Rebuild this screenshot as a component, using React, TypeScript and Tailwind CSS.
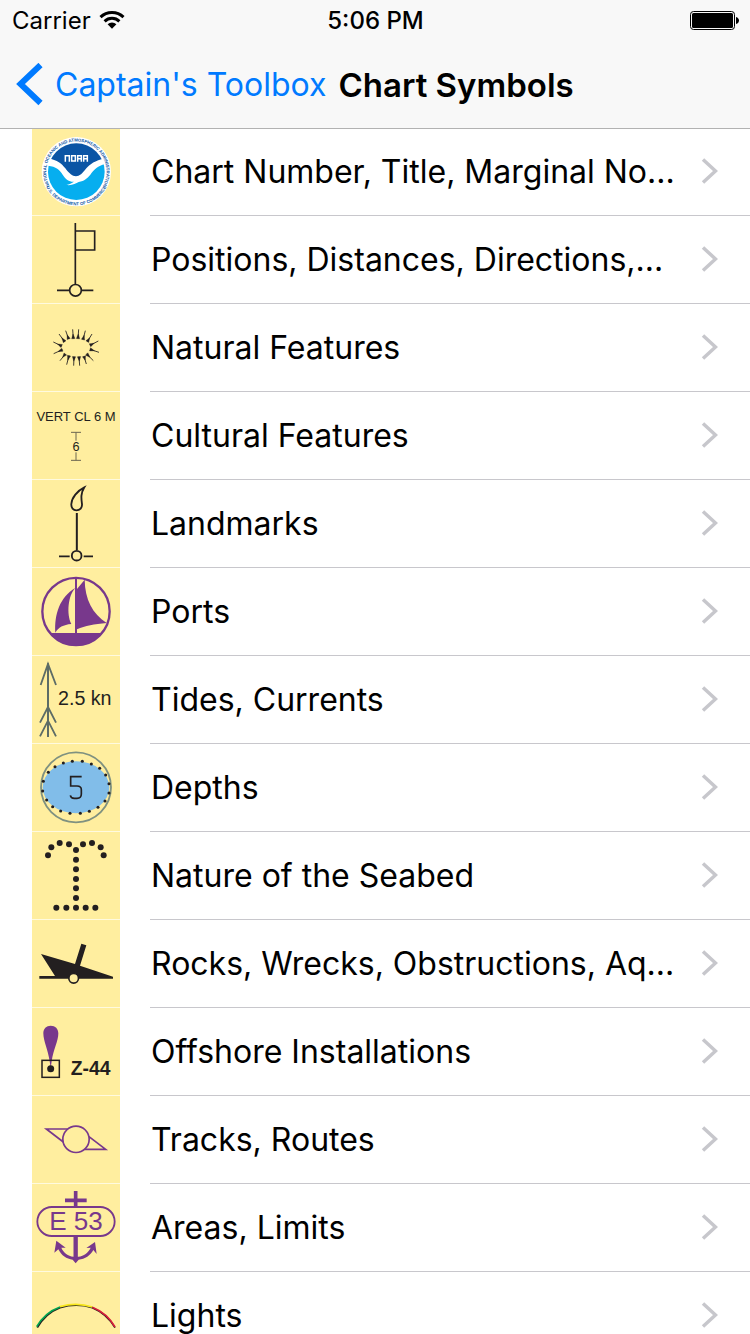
import React from "react";

const INK = "#231f20";
const PURPLE = "#78388c";
const SLATE = "#5d6c66";
const SANS = "'Liberation Sans', Arial, sans-serif";

function Symbol({ top, children }: { top: number; children: React.ReactNode }) {
  return (
    <svg viewBox={`24 ${top} 264 261`} className="block w-full" aria-hidden="true">
      {children}
    </svg>
  );
}

function Noaa() {
  return (
    <Symbol top={6}>
      <defs>
        <clipPath id="noaa-disc">
          <circle cx="157" cy="137" r="85" />
        </clipPath>
        <path id="noaa-upper" d="M93 201 A90.500 90.500 0 1 1 221 201" />
        <path id="noaa-lower" d="M56 137 A101 101 0 0 0 258 137" />
      </defs>
      <circle cx="157" cy="137" r="104" fill="#fff" />
      <g clipPath="url(#noaa-disc)">
        <path
          d="M70 40 H244 V97 C212 103 199 114 187 127 C176 142 166 151 156 151 C145 151 134 141 124 127 C113 113 100 100 70 97Z"
          fill="#0b55a5"
        />
        <path
          d="M66 119 C94 120 107 131 116 146 C125 160 136 168 150 167 C143 172 136 174 127 177 C145 179 155 173 164 168 C182 164 190 157 199 146 C211 129 224 118 248 113 V228 H66Z"
          fill="#06aeef"
        />
      </g>
      <path d="M124 107V89H136V107M143 89H154V105H143ZM161 107V89H172V107M161 98H172M179 107V89H190V107M179 98H190" fill="none" stroke="#fff" strokeWidth="4.500" />
      <g fill="#0b55a5" fontFamily={SANS} fontWeight="700" textAnchor="middle">
        <text fontSize="13">
          <textPath href="#noaa-upper" startOffset="50%">
            NATIONAL OCEANIC AND ATMOSPHERIC ADMINISTRATION
          </textPath>
        </text>
        <text fontSize="13">
          <textPath href="#noaa-lower" startOffset="50%">
            U.S. DEPARTMENT OF COMMERCE
          </textPath>
        </text>
      </g>
    </Symbol>
  );
}

function Flag() {
  return (
    <Symbol top={6}>
      <g fill="none" stroke={INK} strokeWidth="5">
        <path d="M154 27V211M154 51H212V108H154" />
        <circle cx="154.500" cy="229" r="17.500" />
        <path d="M99 229H136M173 229H208" />
      </g>
    </Symbol>
  );
}

const HACHURES = [
  [88, 384, 113, 396], [105, 360, 122, 383], [125, 350, 134, 375], [146, 346, 148, 374],
  [164, 346, 162, 374], [184, 350, 177, 377], [204, 360, 190, 383], [223, 381, 198, 394],
  [225, 415, 198, 406], [208, 440, 188, 420], [187, 450, 180, 427], [167, 455, 165, 428],
  [149, 455, 150, 428], [128, 452, 135, 425], [108, 440, 124, 420], [89, 419, 115, 407],
];

function Hill() {
  return (
    <Symbol top={270}>
      {HACHURES.map(([x1, y1, x2, y2]) => {
        const length = Math.hypot(x2 - x1, y2 - y1);
        const nx = -(y2 - y1) / length;
        const ny = (x2 - x1) / length;
        const mx = x1 + (x2 - x1) * 0.5;
        const my = y1 + (y2 - y1) * 0.5;
        return (
          <g key={`${x1}-${y1}`} fill={INK} stroke={INK}>
            <path d={`M${x1} ${y1}L${x2} ${y2}`} strokeWidth="2.600" />
            <path
              d={`M${mx} ${my}L${x2 + nx * 5} ${y2 + ny * 5}L${x2 - nx * 5} ${y2 - ny * 5}Z`}
              strokeWidth="1"
            />
          </g>
        );
      })}
    </Symbol>
  );
}

function Clearance() {
  return (
    <Symbol top={6}>
      <g fill={INK} fontFamily={SANS} textAnchor="middle">
        <text x="156" y="94" fontSize="39">VERT CL 6 M</text>
        <text x="156" y="183" fontSize="38">6</text>
      </g>
      <path d="M141 127H171M156 127V152M141 211H171M156 187V211" stroke="#6b6650" strokeWidth="3" />
    </Symbol>
  );
}

function Flare() {
  return (
    <Symbol top={270}>
      <g fill="none" stroke={INK} strokeWidth="5.500">
        <path d="M181 292C160 302 143 324 142 342C141 354 148 361 157 361C168 361 175 353 174 342C172 326 169 312 181 292Z" />
        <path d="M158.500 369V480" strokeWidth="6" />
        <circle cx="158" cy="497" r="14.500" />
        <path d="M105 499H137M179 499H207" />
      </g>
    </Symbol>
  );
}

function Marina() {
  return (
    <Symbol top={6}>
      <circle cx="156" cy="136.500" r="101" fill="none" stroke={PURPLE} strokeWidth="7" />
      <path d="M78 201H234C218 224 190 239 156 239C122 239 94 224 78 201Z" fill={PURPLE} />
      <path d="M153 36H159V203H153Z" fill={PURPLE} />
      <path d="M154 66C132 88 127 144 142 174C118 176 103 184 94 200C91 145 107 94 154 66Z" fill={PURPLE} />
      <path d="M182 41C183 101 205 142 248 171C210 174 184 179 159 190V69Z" fill={PURPLE} />
    </Symbol>
  );
}

function Current() {
  return (
    <Symbol top={270}>
      <g fill="none" stroke={SLATE} strokeWidth="5.500">
        <path d="M72 292V513" strokeWidth="6" />
        <path d="M50 357L72 294L96 357M48 470L72 423L96 470M48 511L72 464L96 511" />
      </g>
      <text x="102" y="417" fill={INK} fontFamily={SANS} fontSize="59">2.5 kn</text>
    </Symbol>
  );
}

const SOUNDING_DOTS = [
  [145, 58], [175, 58], [202, 66], [227, 79], [245, 99], [255, 125], [255, 153], [243, 177], [222, 196],
  [196, 208], [169, 214], [138, 214], [110, 207], [86, 194], [68, 174], [56, 147], [58, 118], [73, 91],
  [93, 74], [118, 63],
];

function Depth() {
  return (
    <Symbol top={6}>
      <circle cx="156" cy="136" r="105" fill="none" stroke="#7f9180" strokeWidth="5.500" />
      <ellipse cx="156" cy="136" rx="100" ry="78" fill="#81bde9" />
      {SOUNDING_DOTS.map(([x, y]) => (
        <circle key={`${x}-${y}`} cx={x} cy={y} r="4.600" fill={INK} />
      ))}
      <path
        d="M173 104H140V132H159C168 132 172 136 172 143V156C172 165 167 169 159 169H151C144 169 140 166 139 160"
        fill="none"
        stroke={INK}
        strokeWidth="5"
      />
    </Symbol>
  );
}

const SEABED_DOTS = [
  [72, 340], [82, 316], [107, 303], [135, 307], [156, 324], [177, 307], [204, 303], [230, 316], [239, 340],
  [156, 353], [156, 382], [156, 411], [156, 439], [156, 468],
  [97, 497], [127, 497], [156, 497], [185, 497], [214, 497],
];

function Seabed() {
  return (
    <Symbol top={270}>
      {SEABED_DOTS.map(([x, y]) => (
        <circle key={`${x}-${y}`} cx={x} cy={y} r="9" fill={INK} />
      ))}
    </Symbol>
  );
}

function Wreck() {
  return (
    <Symbol top={6}>
      <path d="M51 108L153 138L172 77L187 82L168 143L267 176V182H46V174H93Z" fill={INK} />
      <circle cx="149" cy="181" r="14.500" fill="#ffee9f" stroke={INK} strokeWidth="5" />
    </Symbol>
  );
}

function Platform() {
  return (
    <Symbol top={270}>
      <path d="M77 430C72 395 58 370 58 346C58 332 67 323 80 323C94 323 103 332 103 346C103 370 88 395 83 430L80 450Z" fill={PURPLE} />
      <rect x="54" y="427" width="52" height="51" fill="none" stroke={INK} strokeWidth="4.500" />
      <circle cx="80" cy="452" r="10.500" fill={INK} />
      <text x="140" y="471" fill={INK} fontFamily={SANS} fontWeight="700" fontSize="58">Z-44</text>
    </Symbol>
  );
}

function Track() {
  return (
    <Symbol top={6}>
      <g fill="none" stroke={PURPLE} strokeWidth="5">
        <circle cx="156" cy="136" r="39.500" />
        <path d="M131 105H67L118 144M182 166H245L195 128" />
      </g>
    </Symbol>
  );
}

function Anchorage() {
  return (
    <Symbol top={270}>
      <g fill="none" stroke={PURPLE}>
        <rect x="40" y="339" width="232" height="87" rx="43.500" strokeWidth="5.500" />
        <path d="M155 291V338M123 319H188" strokeWidth="11" />
        <path d="M155 427V492" strokeWidth="13" />
      </g>
      <path
        d="M97 440L125 461L112 461C119 477 132 486 148 488H163C180 486 192 477 200 461L187 462L213 444L218 480L208 468C199 485 183 495 164 497L155 508L146 497C127 495 113 485 103 466L91 476Z"
        fill={PURPLE}
      />
      <text x="156" y="409" fill={PURPLE} fontFamily={SANS} fontSize="78" textAnchor="middle">E 53</text>
    </Symbol>
  );
}

function SectorLight() {
  return (
    <Symbol top={534}>
      <g fill="none" strokeWidth="5">
        <path d="M40 701C56 673 79 652 108 641C140 631 173 631 205 641C234 653 257 673 273 701" stroke={INK} strokeWidth="5" />
        <path d="M38 698C54 671 77 650 108 639" stroke="#00a551" />
        <path d="M108 638C140 629 173 629 205 639" stroke="#f8e71c" />
        <path d="M205 640C235 652 257 671 273 699" stroke="#d81f3a" />
      </g>
    </Symbol>
  );
}

const SECTIONS: { title: string; Icon: () => React.ReactElement }[] = [
  { title: "Chart Number, Title, Marginal No...", Icon: Noaa },
  { title: "Positions, Distances, Directions,...", Icon: Flag },
  { title: "Natural Features", Icon: Hill },
  { title: "Cultural Features", Icon: Clearance },
  { title: "Landmarks", Icon: Flare },
  { title: "Ports", Icon: Marina },
  { title: "Tides, Currents", Icon: Current },
  { title: "Depths", Icon: Depth },
  { title: "Nature of the Seabed", Icon: Seabed },
  { title: "Rocks, Wrecks, Obstructions, Aq...", Icon: Wreck },
  { title: "Offshore Installations", Icon: Platform },
  { title: "Tracks, Routes", Icon: Track },
  { title: "Areas, Limits", Icon: Anchorage },
  { title: "Lights", Icon: SectorLight },
];

function StatusBar() {
  return (
    <div className="grid h-[42px] grid-cols-[1fr_auto_1fr] items-center pr-[11px] pl-3 text-[24px] leading-10">
      <div className="flex items-center gap-2">
        <span>Carrier</span>
        <svg width="26" height="20" viewBox="0 0 26 20" aria-hidden="true">
          <g fill="none" stroke="#000" strokeWidth="3">
            <path d="M1.500 6.200A16.500 16.500 0 0 1 24.500 6.200" />
            <path d="M5.600 10.300A10.700 10.700 0 0 1 20.400 10.300" />
          </g>
          <path d="M13 17.800L8.600 13.300A6.300 6.300 0 0 1 17.400 13.300Z" />
        </svg>
      </div>
      <span className="font-medium">5:06 PM</span>
      <svg className="justify-self-end" width="49" height="20" viewBox="0 0 49 20" aria-hidden="true">
        <rect x="0.500" y="0.500" width="44" height="18" rx="3" fill="none" stroke="#000" />
        <rect x="2" y="2" width="41" height="15" rx="1.500" />
        <path d="M46 6C50 7 50 12 46 13Z" />
      </svg>
    </div>
  );
}

export default function App() {
  return (
    <div className="flex h-screen flex-col bg-white font-[Inter,'Liberation_Sans',sans-serif] text-black">
      <header className="relative z-10 flex h-32 shrink-0 flex-col bg-[#f8f8f8] shadow-[0_1px_0_#b2b2b2]">
        <StatusBar />
        <nav className="flex flex-1 items-center gap-3 pl-4 leading-10 whitespace-nowrap">
          <a href="#toolbox" className="flex items-center gap-3 text-[32px] text-[#007aff]">
            <svg width="27" height="44" viewBox="0 0 27 44" aria-hidden="true">
              <path d="M24.500 2L4.500 21L24.500 40" fill="none" stroke="#007aff" strokeWidth="6" />
            </svg>
            Captain's Toolbox
          </a>
          <h1 className="text-[33px] font-semibold">Chart Symbols</h1>
        </nav>
      </header>
      <main className="min-h-0 flex-1 overflow-y-auto [scrollbar-width:none]">
        <ul>
          {SECTIONS.map(({ title, Icon }) => (
            <li key={title}>
              <a href="#section" className="flex h-[88px] gap-[30px] pl-8">
                <span className="w-[88px] shrink-0 border-b border-[#fffadf] bg-[#ffee9f]">
                  <Icon />
                </span>
                <span className="flex min-w-0 flex-1 items-center justify-between border-b border-[#c8c7cc] pr-8 pl-px text-[32px] leading-10 whitespace-nowrap">
                  {title}
                  <svg className="shrink-0" width="17" height="28" viewBox="0 0 17 28" aria-hidden="true">
                    <path d="M2 1.500L14.500 13L2 24.500" fill="none" stroke="#c7c7cc" strokeWidth="3.500" />
                  </svg>
                </span>
              </a>
            </li>
          ))}
        </ul>
      </main>
    </div>
  );
}
